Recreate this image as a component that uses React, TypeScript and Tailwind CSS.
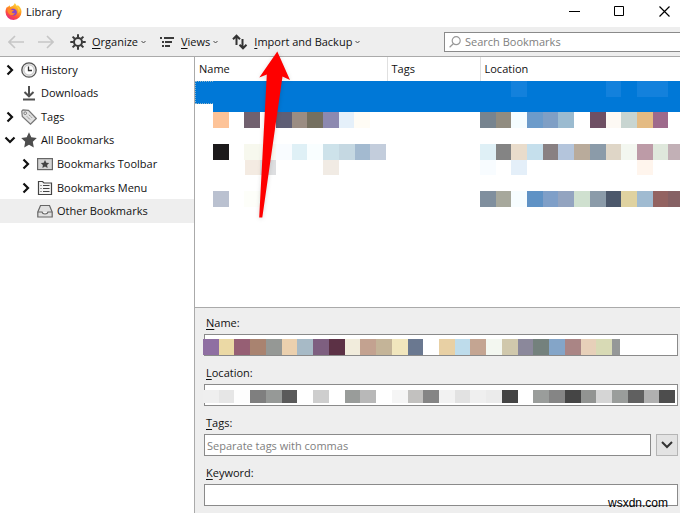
import React, { useState } from 'react';

// width of one censored block
const BLOCK = 15.73;

type BookmarkRow = {
  height: string;
  name: string[];
  location: string[];
};

// '' leaves the block empty
const rows: BookmarkRow[] = [
  {
    height: 'h-[16px]',
    name: ['#fdc398', '', '#71616f', '#ffffff', '#5f5f76', '#9b8d83', '#757060', '#8c89b0', '#e5f0fa', '#fffcf5'],
    location: ['#77848f', '#918c80', '#f5fdff', '#6c9bca', '#7f9fc5', '#9bbbd0', '', '#6f5064', '#fdf9f4', '#c8d5d1', '#e4bb83', '#9e6a8c', ''],
  },
  { height: 'h-[16px]', name: [], location: [] },
  {
    height: 'h-[16px]',
    name: ['#1c1a1b', '', '#f7f8ee', '#fbfbf4', '#f9fcff', '#dff0f6', '#f9feff', '#cde2ea', '#c5d8e2', '#a3bad0', '#c3cddc'],
    location: ['#dff0f6', '#848484', '#e9dccb', '#c5dfec', '#898082', '#b4c5dc', '#b9ab9b', '#8b9ba9', '#dfd6c7', '#f3f7f0', '#bd9ba7', '#dfe8dc', '#c2b0b6'],
  },
  {
    height: 'h-[15px]',
    name: ['', '', '#f4ebe2', '#dedfe1', '', '', '', '#f1ebe4'],
    location: ['#f8fcff', '', '#e4eff9', '', '', '', '', '', '', '', '#fff5ed', '', ''],
  },
  { height: 'h-[16px]', name: [], location: [] },
  {
    height: 'h-[16px]',
    name: ['#bac1d0', '', '#fdfef9'],
    location: ['#808f9e', '#a7a89c', '#f7fdff', '#5f92c5', '#7f9fc8', '#93a4c0', '#cfe0cf', '#8b9ba9', '#4c586b', '#dfd2a0', '#a0bbd1', '#936361', '#866164'],
  },
];

const nameBlocks = [
  '#8f6fa2', '#ebd9a5', '#965f74', '#a98370', '#959895', '#ebd0ae', '#a7bac6', '#7e5f80', '#5c3145',
  '#f1ecdc', '#c3a290', '#c4b498', '#f1e6bd', '#6a7890', '#ffffff', '#e8d0a4', '#bedceb', '#c4a592',
  '#f3f7f0', '#d0c8ac', '#8b889b', '#74817d', '#84a5c8', '#aa8585', '#e7d0b9', '#d8dab5',
];

const locationBlocks = [
  '#efefef', '#e6e6e6', '#fdfdfd', '#7f7f7f', '#969997', '#5a5a5a', '#ffffff', '#cecece', '#ffffff', '#999c9a',
  '#b8b8b8', '#ffffff', '#f5f5f5', '#c2c1bf', '#858585', '#f2f2f2', '#e2e2e2', '#efefef', '#ebebeb', '#444444',
  '#ffffff', '#9a9d9b', '#858585', '#454545', '#929492', '#d5d5d5', '#9a9d9b', '#606060', '#b0b0b0', '#4d4d4d',
];

function Blocks({ colors, className = '' }: { colors: string[]; className?: string }) {
  if (!colors.length) return null;
  return (
    <svg
      className={`block max-w-none ${className}`}
      width={Math.round(colors.length * BLOCK)}
      viewBox={`0 0 ${colors.length} 1`}
      preserveAspectRatio="none"
      shapeRendering="crispEdges"
      aria-hidden="true"
    >
      {colors.map((c, i) => c && <rect key={i} x={i} y="0" width="1" height="1" fill={c} />)}
    </svg>
  );
}

function Chevron({ open = false }: { open?: boolean }) {
  return (
    <svg className={`shrink-0 ${open ? 'rotate-90' : ''}`} width="12" height="12" viewBox="0 0 12 12" fill="none" stroke="#111" strokeWidth="2.2">
      <path d="M3.5 1.5 8 6l-4.5 4.5" />
    </svg>
  );
}

function FirefoxLogo() {
  return (
    <svg width="17" height="17" viewBox="0 0 17 17" aria-hidden="true">
      <defs>
        <linearGradient id="fox" x1="0.8" y1="0" x2="0.25" y2="1">
          <stop offset="0" stopColor="#ffe14a" />
          <stop offset="0.4" stopColor="#ff9a1f" />
          <stop offset="0.7" stopColor="#ff4f3d" />
          <stop offset="1" stopColor="#e0268a" />
        </linearGradient>
      </defs>
      <path d="M9.5.3c1.2.7 1.9 1.7 2.2 2.8.8-.1.9-.6.9-1 2.500 1.600 3.900 4 3.900 6.700a8 8 0 0 1-16 .2C.5 6.500 1.400 4.700 2.300 3.500l.3 1.100C3.400 3.300 4 2.700 4.700 2.200c0 .8.200 1.300.6 1.700C6.300 3.400 8.900 3.300 9.500.3z" fill="url(#fox)" />
      <path d="M5 7.500c1-1.700 3-2.100 4.600-1.500 1.800.7 2.700 2.400 2.200 4.200-.5 1.700-2 2.600-3.700 2.400C6 12.300 4.600 10 5 7.500z" fill="#8a45c9" />
      <path d="M2.400 6.300c1.300-.7 2.900-.4 3.900.5l2.600.5c-.3.9-1.200 1.300-2.200 1.500.2 1.500 2 1.900 3.300 1.100-.8 2-3.300 2.800-5.200 1.500C3.100 10.300 2.200 8.400 2.400 6.300z" fill="#ff8a2a" />
      <path d="M9.500.3c1.800 1.300 2.100 3.200 3.100 4.500 1.200 1.500 1.300 3.300.7 5 .9-.5 1.300-1.500 1.300-2.600-.4-2.200-2-3-2.900-4.100C11.400 2 10.700 1 9.500.3z" fill="#ffdf4c" />
    </svg>
  );
}

function ClockIcon() {
  return (
    <svg width="16" height="16" viewBox="0 0 16 16" fill="none">
      <circle cx="8" cy="8" r="7.200" fill="#e3e3e3" stroke="#555" strokeWidth="1.300" />
      <circle cx="8" cy="8" r="5" fill="#fff" stroke="#aaa" strokeWidth="0.600" />
      <path d="M7.500 4.500V8.500H11" stroke="#333" strokeWidth="1.300" />
    </svg>
  );
}

function DownloadIcon() {
  return (
    <svg width="16" height="16" viewBox="0 0 16 16" fill="none" stroke="#505050" strokeWidth="2">
      <path d="M8 1v10M3.500 7 8 11.300 12.500 7M2 14.500h12" />
    </svg>
  );
}

function TagIcon() {
  return (
    <svg width="16" height="16" viewBox="0 0 16 16" fill="none" stroke="#777">
      <path d="M.8 2.200 2 .8 7.500 1.300 15.300 9.500 9.500 15.200 1.300 7.500z" fill="#e2e2e2" strokeWidth="1.200" />
      <circle cx="4.200" cy="4.200" r="1.300" fill="#fff" />
      <path d="M6 7.500 9.500 11M8 5.800l3.500 3.500" strokeDasharray="1.500 1" />
    </svg>
  );
}

function StarIcon() {
  return (
    <svg width="16" height="16" viewBox="0 0 16 16" fill="#4d4d4d">
      <path d="m8 .3 2.300 5 5.500.7-4 3.800 1 5.700L8 12.700l-4.800 2.800 1-5.700-4-3.800 5.500-.7z" />
    </svg>
  );
}

function ToolbarFolderIcon() {
  return (
    <svg width="16" height="16" viewBox="0 0 16 16">
      <rect x=".6" y="2.600" width="14.800" height="11" fill="#d5d5d5" stroke="#666" strokeWidth="1.200" />
      <path d="m8 4 1.300 2.700 2.900.3-2.100 2 .5 3L8 10.500 5.400 12l.5-3-2.100-2 2.900-.3z" fill="#444" />
    </svg>
  );
}

function MenuFolderIcon() {
  return (
    <svg width="16" height="16" viewBox="0 0 16 16" fill="none" stroke="#444">
      <path d="M1.500 14.500v-13h4l1.500 1.500h7.500v11.500z" fill="#f5f5f5" strokeWidth="1.200" />
      <path d="M3.500 5.500h1M6 5.500h6.500M3.500 8.500h1M6 8.500h6.500M3.500 11.500h1M6 11.500h6.500" strokeWidth="1.200" />
    </svg>
  );
}

function InboxIcon() {
  return (
    <svg width="16" height="16" viewBox="0 0 16 16" fill="none" stroke="#666" strokeWidth="1.200">
      <path d="M.8 9 3.500 2.500h9L15.200 9v5H.8z" fill="#e0e0e0" />
      <path d="M.8 9H5c.3 1.300 1.300 2 3 2s2.700-.7 3-2h4.200" fill="#f6f6f6" />
    </svg>
  );
}

function GearIcon() {
  return (
    <svg width="16" height="16" viewBox="0 0 16 16" fill="none" stroke="#3a3a3a">
      <circle cx="8" cy="8" r="4" strokeWidth="2" />
      <path d="M8 .3v3.200M8 12.500v3.200M.3 8h3.200M12.500 8h3.200M2.600 2.600l2.200 2.200M11.200 11.200l2.200 2.200M13.400 2.600l-2.200 2.200M4.800 11.200l-2.200 2.200" strokeWidth="2" />
    </svg>
  );
}

function ViewsIcon() {
  return (
    <svg width="15" height="14" viewBox="0 0 15 14" stroke="#3a3a3a" strokeWidth="2">
      <path d="M0 3h2M4 3h10M2 7h2M5 7h7M2 11h2M5 11h5" />
    </svg>
  );
}

function ImportIcon() {
  return (
    <svg width="16" height="16" viewBox="0 0 16 16" fill="none" stroke="#333" strokeWidth="2">
      <path d="M4.500 11V2M1 5.200 4.500 1.700 8 5.200M10.500 5v9M7.500 10.800l3.500 3.500 3.500-3.500" />
    </svg>
  );
}

const tree = [
  { label: 'History', icon: <ClockIcon />, arrow: 'closed', nested: false },
  { label: 'Downloads', icon: <DownloadIcon />, arrow: '', nested: false },
  { label: 'Tags', icon: <TagIcon />, arrow: 'closed', nested: false },
  { label: 'All Bookmarks', icon: <StarIcon />, arrow: 'open', nested: false },
  { label: 'Bookmarks Toolbar', icon: <ToolbarFolderIcon />, arrow: 'closed', nested: true },
  { label: 'Bookmarks Menu', icon: <MenuFolderIcon />, arrow: 'closed', nested: true },
  { label: 'Other Bookmarks', icon: <InboxIcon />, arrow: '', nested: true },
];

function MenuButton({ icon, label }: { icon: React.ReactNode; label: string }) {
  return (
    <button type="button" className="flex items-center gap-1 whitespace-nowrap">
      {icon}
      <span className="ml-0.5"><u className="underline-offset-2">{label[0]}</u>{label.slice(1)}</span>
      <svg className="-ml-px" width="5" height="4" viewBox="0 0 5 4" fill="none" stroke="#444"><path d="M.5 1 2.500 3l2-2" /></svg>
    </button>
  );
}

function FieldLabel({ id, text }: { id: string; text: string }) {
  return (
    <label htmlFor={id} className="mb-[3px] ml-0.5 block h-4 leading-4">
      <u className="underline-offset-2">{text[0]}</u>{text.slice(1)}:
    </label>
  );
}

const inputClass = 'block h-[22px] w-full border border-[#8a8a8a] bg-white px-0.5 outline-none placeholder:text-[#808080]';

export default function App() {
  const [selected, setSelected] = useState('Other Bookmarks');
  const [search, setSearch] = useState('');

  return (
    <div className="relative flex min-h-screen flex-col overflow-hidden bg-white font-['Open_Sans','Noto_Sans',sans-serif] text-[11px] leading-4 text-[#111]">
      <header className="flex h-[27px] items-center pb-1 pl-[5px] pr-2.5">
        <FirefoxLogo />
        <h1 className="ml-1">Library</h1>
        <div className="ml-auto flex items-center gap-[34px] text-black">
          <button type="button" aria-label="Minimize">
            <svg width="11" height="11" viewBox="0 0 11 11" stroke="currentColor"><path d="M0 5.500h11" /></svg>
          </button>
          <button type="button" aria-label="Maximize">
            <svg width="11" height="11" viewBox="0 0 11 11" fill="none" stroke="currentColor"><path d="M.5.5h9v9h-9z" /></svg>
          </button>
          <button type="button" aria-label="Close">
            <svg width="11" height="11" viewBox="0 0 11 11" stroke="currentColor" strokeWidth="1.200"><path d="m.5.500 10 10M10.500.500l-10 10" /></svg>
          </button>
        </div>
      </header>

      <div className="flex h-[30px] items-center border-b border-[#aaa] bg-[#eee] pl-2">
        <button type="button" aria-label="Back" disabled>
          <svg width="16" height="14" viewBox="0 0 16 14" fill="none" stroke="#c6c6c6" strokeWidth="1.600"><path d="M16 7H1M7 1 1 7l6 6" /></svg>
        </button>
        <button type="button" aria-label="Forward" disabled className="ml-3.5 mr-4">
          <svg width="16" height="14" viewBox="0 0 16 14" fill="none" stroke="#c6c6c6" strokeWidth="1.600"><path d="M0 7h15M9 1l6 6-6 6" /></svg>
        </button>
        <div className="flex gap-3.5">
          <MenuButton icon={<GearIcon />} label="Organize" />
          <MenuButton icon={<ViewsIcon />} label="Views" />
          <MenuButton icon={<ImportIcon />} label="Import and Backup" />
        </div>
        <div className="ml-auto flex h-5 w-[236px] items-center gap-1 border border-r-0 border-[#8a8a8a] bg-white pl-1">
          <svg className="shrink-0" width="12" height="12" viewBox="0 0 12 12" fill="none" stroke="#999" strokeWidth="1.200"><circle cx="7.200" cy="4.700" r="4" /><path d="M4.300 7.700.6 11.300" /></svg>
          <input
            type="search"
            aria-label="Search Bookmarks"
            placeholder="Search Bookmarks"
            value={search}
            onChange={e => setSearch(e.target.value)}
            className="w-full min-w-0 outline-none placeholder:text-[#808080]"
          />
        </div>
      </div>

      <div className="flex flex-1">
        <nav className="w-[195px] shrink-0 border-r border-[#aaa] pt-px">
          <ul className="grid h-[165px] grid-rows-7">
            {tree.map(item => (
              <li key={item.label}>
                <button
                  type="button"
                  onClick={() => setSelected(item.label)}
                  className={`flex h-full w-full items-center text-left ${item.nested ? 'pl-5' : 'pl-1'} ${selected === item.label ? 'bg-[#eee]' : ''}`}
                >
                  <span className="mr-[5px] w-3 shrink-0">{item.arrow && <Chevron open={item.arrow === 'open'} />}</span>
                  {item.icon}
                  <span className="ml-1 whitespace-nowrap">{item.label}</span>
                </button>
              </li>
            ))}
          </ul>
        </nav>

        <main className="flex min-w-0 flex-1 flex-col">
          <div className="h-[250px] overflow-hidden">
            <table className="w-full table-fixed border-collapse">
              <thead>
                <tr className="h-6 text-left">
                  <th className="w-[192px] border-r border-[#e0e0e0] p-0 pl-1 font-normal">Name</th>
                  <th className="w-[93px] border-r border-[#e0e0e0] p-0 pl-1 font-normal">Tags</th>
                  <th className="p-0 pl-1 font-normal">Location</th>
                </tr>
              </thead>
              <tbody>
                <tr className="h-[31px] bg-[#0078d7]">
                  <td className="p-0">
                    <div className="h-[23px] w-[18px] border border-r-0 border-dotted border-[#8fb5c9]" />
                    <div className="h-2 w-[18px] bg-white" />
                  </td>
                  <td className="p-0" />
                  <td className="p-0 align-top">
                    <Blocks className="h-4" colors={['', '', '#1381dc', '', '', '', '', '', '#1381dc', '', '#1381dc', '#1381dc', '']} />
                  </td>
                </tr>
                {rows.map((row, i) => (
                  <tr key={i} className={row.height}>
                    <td className="p-0 pl-[18px]"><Blocks className={row.height} colors={row.name} /></td>
                    <td className="p-0" />
                    <td className="overflow-hidden p-0"><Blocks className={row.height} colors={row.location} /></td>
                  </tr>
                ))}
              </tbody>
            </table>
          </div>

          <form className="flex flex-1 flex-col gap-[9px] border-t border-[#aaa] bg-[#eee] pb-1 pl-[9px] pr-0.5 pt-[7px]" onSubmit={e => e.preventDefault()}>
            <div>
              <FieldLabel id="name" text="Name" />
              <div className="relative">
                <input id="name" className={inputClass} />
                <Blocks className="absolute -left-px top-[5px] h-4" colors={nameBlocks} />
                <div className="absolute left-[408px] top-[5px] h-4 w-2 bg-[#959898]" />
              </div>
            </div>
            <div>
              <FieldLabel id="location" text="Location" />
              <div className="relative">
                <input id="location" className={inputClass} />
                <Blocks className="absolute -left-px top-[6px] h-[13px]" colors={locationBlocks} />
              </div>
            </div>
            <div>
              <FieldLabel id="tags" text="Tags" />
              <div className="flex gap-[5px]">
                <input id="tags" placeholder="Separate tags with commas" className={inputClass} />
                <button type="button" aria-label="Show all tags" className="flex h-[22px] w-[22px] shrink-0 items-center justify-center border border-[#b5b5b5] bg-[#e3e3e3]">
                  <svg width="12" height="8" viewBox="0 0 12 8" fill="none" stroke="#333" strokeWidth="2"><path d="m1 1 5 5 5-5" /></svg>
                </button>
              </div>
            </div>
            <div>
              <FieldLabel id="keyword" text="Keyword" />
              <input id="keyword" className={inputClass} />
            </div>
          </form>
        </main>
      </div>

      {/* red pointer to the Import and Backup menu */}
      <svg className="pointer-events-none absolute left-[255px] top-[50px] drop-shadow-sm" width="40" height="170" viewBox="0 0 40 170" aria-hidden="true">
        <path d="M22.300 1.500 35 30 27.500 26.500 7.300 167.500H4.200L11.800 24.500 4.300 27.500z" fill="#fe0000" />
      </svg>

      <p className="pointer-events-none absolute bottom-0.5 right-3 font-['Liberation_Sans',sans-serif] text-[12px] text-black">wsxdn.com</p>
    </div>
  );
}
